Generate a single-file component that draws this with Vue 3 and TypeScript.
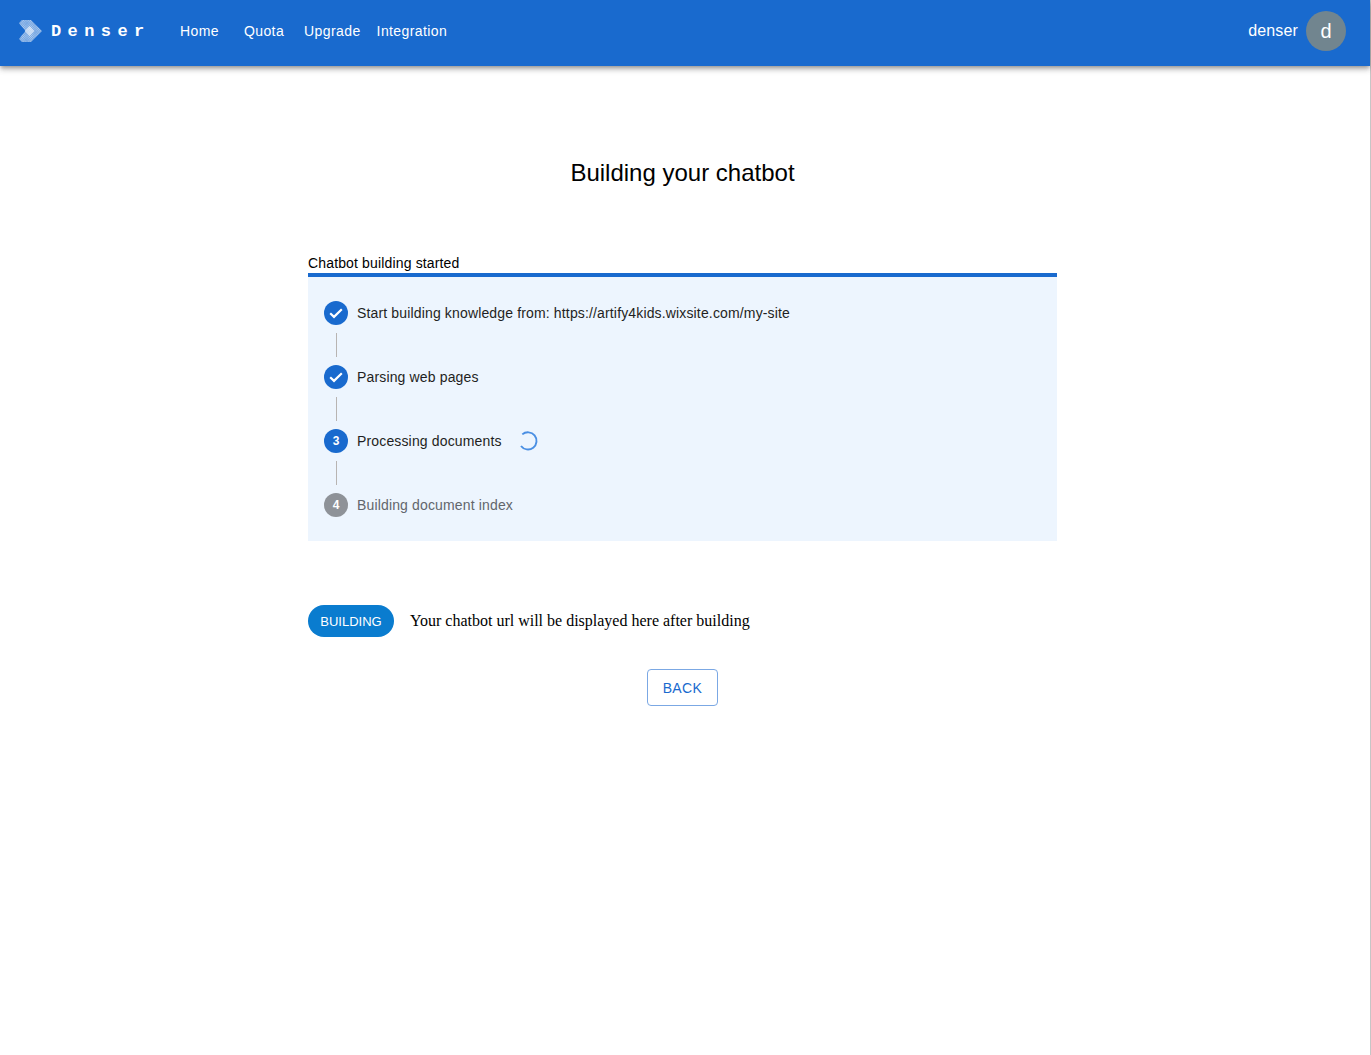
<script setup lang="ts">
interface Step { label: string; state: 'done' | 'active' | 'pending'; num: number }
const steps: Step[] = [
  { label: 'Start building knowledge from: https://artify4kids.wixsite.com/my-site', state: 'done', num: 1 },
  { label: 'Parsing web pages', state: 'done', num: 2 },
  { label: 'Processing documents', state: 'active', num: 3 },
  { label: 'Building document index', state: 'pending', num: 4 },
]
const nav = ['Home', 'Quota', 'Upgrade', 'Integration']
</script>

<template>
  <div class="page">
    <header class="bar">
      <svg class="logo" width="24" height="24" viewBox="0 0 24 24">
        <defs>
          <pattern id="dots" width="1.6" height="1.6" patternUnits="userSpaceOnUse" patternTransform="rotate(45)">
            <rect width="1.6" height="1.6" fill="#fff" fill-opacity=".42" />
            <rect width=".8" height=".8" fill="#fff" fill-opacity=".5" />
          </pattern>
        </defs>
        <path d="M1 4 4 1h9l11 11-11 11H4l-3-3 7-8z" fill="url(#dots)" />
        <path d="M6.5 12 11.5 7l5 5-5 5z" fill="#fff" fill-opacity=".55" />
        <path d="M1.5 4.500 8 12l-5 5.500" fill="none" stroke="#fff" stroke-opacity=".25" />
      </svg>
      <span class="brand">Denser</span>
      <nav class="nav">
        <a v-for="item in nav" :key="item" class="nav-item" :class="'nav-' + item.toLowerCase()">{{ item }}</a>
      </nav>
      <span class="user">denser</span>
      <span class="avatar">d</span>
    </header>

    <main class="main">
      <h1 class="title">Building your chatbot</h1>
      <section class="content">
        <div class="status">Chatbot building started</div>
        <div class="panel">
          <template v-for="(step, i) in steps" :key="step.num">
            <div class="step">
              <span class="badge" :class="{ grey: step.state === 'pending' }">
                <svg v-if="step.state === 'done'" width="16" height="16" viewBox="0 0 16 16">
                  <path d="M2.200 8.300 6 11.900 13.800 4.300" fill="none" stroke="#fff" stroke-width="2.200" />
                </svg>
                <template v-else>{{ step.num }}</template>
              </span>
              <span class="label" :class="{ muted: step.state === 'pending' }">{{ step.label }}</span>
              <svg v-if="step.state === 'active'" class="spinner" width="20" height="20" viewBox="0 0 20 20">
                <path d="M4.300 3.400A8.600 8.600 0 1 1 3 15" fill="none" stroke="#4a8fe3" stroke-width="1.900" />
              </svg>
            </div>
            <div v-if="i < steps.length - 1" class="connector"></div>
          </template>
        </div>
        <div class="result">
          <span class="chip">BUILDING</span>
          <span class="hint">Your chatbot url will be displayed here after building</span>
        </div>
        <div class="actions">
          <button class="back" type="button">BACK</button>
        </div>
      </section>
    </main>
  </div>
</template>

<style scoped>
.page {
  min-height: 1055px;
  box-sizing: border-box;
  border-right: 1px solid #c6c6c6;
  background: #fff;
  font-family: "Liberation Sans", Arial, sans-serif;
}
.bar {
  height: 66px;
  box-sizing: border-box;
  display: flex;
  align-items: center;
  padding: 0 24px 4px 18px;
  background: #196ace;
  color: #fff;
  box-shadow: 0 2px 4px -1px rgba(0,0,0,.3), 0 4px 5px rgba(0,0,0,.16), 0 1px 10px rgba(0,0,0,.1);
}
.logo { flex: none; }
.brand {
  margin-left: 9px;
  width: 129px;
  flex: none;
  font: bold 17px "Liberation Mono", "DejaVu Sans Mono", monospace;
  letter-spacing: 6.4px;
}
.nav { display: flex; flex: 1; font-size: 14px; letter-spacing: .4px; }
.nav-item { color: #fff; }
.nav-home { margin-right: 25px; }
.nav-quota { margin-right: 20px; }
.nav-upgrade { margin-right: 16px; }
.user { font-size: 16px; margin-right: 8px; letter-spacing: .15px; }
.avatar {
  width: 40px;
  height: 40px;
  border-radius: 50%;
  background: #71858f;
  font-size: 20px;
  display: flex;
  align-items: center;
  justify-content: center;
}
.main {
  display: flex;
  flex-direction: column;
  align-items: center;
  padding-right: 5px;
}
.title {
  margin: 92px 0 0;
  height: 30px;
  line-height: 30px;
  font-size: 24px;
  font-weight: 400;
  color: #000;
}
.content { width: 749px; margin-top: 66px; }
.status {
  height: 19px;
  line-height: 18px;
  font-size: 14px;
  letter-spacing: .15px;
  color: #000;
}
.panel {
  border-top: 4px solid #196ace;
  background: #edf5fe;
  padding: 24px 16px;
  height: 268px;
  box-sizing: border-box;
}
.step {
  height: 24px;
  display: flex;
  align-items: center;
  font-size: 14px;
  letter-spacing: .15px;
}
.badge {
  flex: none;
  width: 24px;
  height: 24px;
  border-radius: 50%;
  background: #196ace;
  color: #fff;
  font-size: 12px;
  font-weight: 700;
  letter-spacing: 0;
  display: flex;
  align-items: center;
  justify-content: center;
}
.badge.grey { background: #8e9298; }
.label { margin-left: 9px; color: #1f1f22; }
.label.muted { color: #62666c; }
.spinner { margin-left: 16px; }
.connector {
  height: 24px;
  margin: 8px 0 8px 12px;
  border-left: 1px solid #b8b4b2;
}
.result {
  margin-top: 64px;
  display: flex;
  align-items: center;
}
.chip {
  width: 86px;
  height: 32px;
  border-radius: 16px;
  background: #0a7ccf;
  color: #fff;
  font-size: 13px;
  display: flex;
  align-items: center;
  justify-content: center;
}
.hint {
  margin-left: 16px;
  font: 16px "Liberation Serif", "Times New Roman", serif;
  color: #000;
}
.actions { margin-top: 32px; display: flex; justify-content: center; }
.back {
  width: 71px;
  height: 37px;
  background: #fff;
  border: 1px solid #7ba8e4;
  border-radius: 4px;
  color: #196ace;
  font: 14px "Liberation Sans", Arial, sans-serif;
  letter-spacing: .4px;
  padding: 0;
}
</style>

<style>
html, body { margin: 0; background: #fff; }
</style>
